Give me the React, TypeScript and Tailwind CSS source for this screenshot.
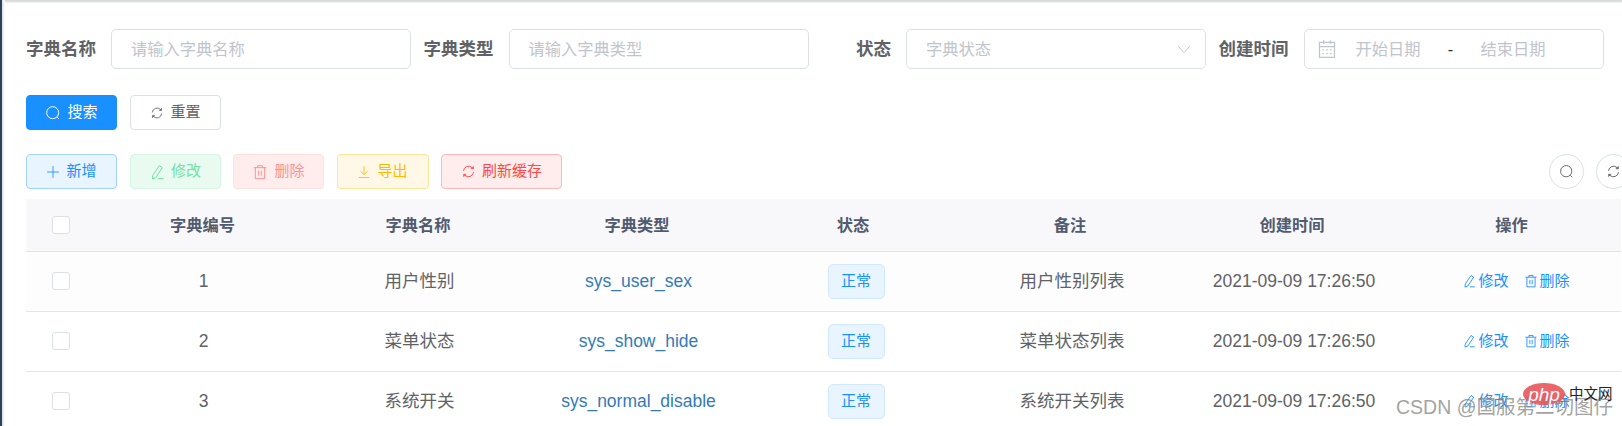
import React from "react";

type IconProps = { className?: string };
const Svg = ({ className, children }: IconProps & { children: React.ReactNode }) => (
  <svg viewBox="0 0 24 24" fill="none" stroke="currentColor" strokeWidth={1.5} className={className}>
    {children}
  </svg>
);
const SearchIcon = ({ className }: IconProps) => (
  <Svg className={className}>
    <circle cx="11.5" cy="11.5" r="9" />
    <path d="M18 18l3 3" />
  </Svg>
);
const RefreshIcon = ({ className }: IconProps) => (
  <Svg className={className}>
    <path d="M4 11a8.2 8.2 0 0 1 14-5l1 1" />
    <path d="M20 13a8.2 8.2 0 0 1-14 5l-1-1" />
    <path d="M19.8 3.5v4.2h-4.2" fill="currentColor" strokeWidth={1} />
    <path d="M4.2 20.5v-4.2h4.2" fill="currentColor" strokeWidth={1} />
  </Svg>
);
const EditIcon = ({ className }: IconProps) => (
  <Svg className={className}>
    <path d="M15.5 2.5l4.5 3-10 15-4.8 2 .3-5.2z" />
    <path d="M13.5 22H22" />
  </Svg>
);
const TrashIcon = ({ className }: IconProps) => (
  <Svg className={className}>
    <path d="M2.5 5.5h19M8.5 5.5V2.5h7v3M5 5.5V22h14V5.5M10 10v7.5M14 10v7.5" />
  </Svg>
);
const PlusIcon = ({ className }: IconProps) => (
  <Svg className={className}>
    <path d="M12 2v20M2 12h20" />
  </Svg>
);
const DownloadIcon = ({ className }: IconProps) => (
  <Svg className={className}>
    <path d="M12 2v14M6 10.5l6 6 6-6M3 21.5h18" />
  </Svg>
);
const CalendarIcon = ({ className }: IconProps) => (
  <Svg className={className}>
    <rect x="3" y="4" width="18" height="18" />
    <path d="M3 9h18M8 1.5V6M16 1.5V6M6.5 13h2M11 13h2M15.5 13h2M6.5 17.5h2M11 17.5h2M15.5 17.5h2" />
  </Svg>
);
const ChevronIcon = ({ className }: IconProps) => (
  <Svg className={className}>
    <path d="M3 7.5l9 10 9-10" />
  </Svg>
);

const Label = ({ children }: { children: React.ReactNode }) => (
  <label className="w-[85px] shrink-0 pr-[15px] text-right text-[17.5px] font-bold leading-[40px] text-[#606266] whitespace-nowrap">
    {children}
  </label>
);

const TextField = ({ placeholder }: { placeholder: string }) => (
  <div className="flex h-10 w-[300px] shrink-0 items-center rounded-[5px] border border-[#dcdfe6] bg-white pl-[19px] text-[16.25px] text-[#c0c4cc]">
    {placeholder}
  </div>
);

const ActionButton = ({
  className,
  icon,
  children,
}: {
  className: string;
  icon: React.ReactNode;
  children: React.ReactNode;
}) => (
  <button
    type="button"
    className={`flex h-[35px] shrink-0 items-center justify-center gap-[6px] rounded-[4px] border text-[15px] ${className}`}
  >
    {icon}
    <span>{children}</span>
  </button>
);

const rows = [
  { id: 1, name: "用户性别", type: "sys_user_sex", note: "用户性别列表", bg: "bg-[#fdfdfe]" },
  { id: 2, name: "菜单状态", type: "sys_show_hide", note: "菜单状态列表", bg: "bg-white" },
  { id: 3, name: "系统开关", type: "sys_normal_disable", note: "系统开关列表", bg: "bg-white" },
];

const Checkbox = () => (
  <span className="ml-[26px] block h-[18px] w-[18px] rounded-[3px] border border-[#dcdfe6] bg-white" />
);

const headers = ["字典编号", "字典名称", "字典类型", "状态", "备注", "创建时间", "操作"];

export default function App() {
  return (
    <div
      className="relative flex h-[426px] w-[1622px] overflow-hidden bg-white"
      style={{ fontFamily: '"Liberation Sans","Noto Sans CJK SC",sans-serif' }}
    >
      <div className="h-full w-[5px] shrink-0 bg-gradient-to-r from-[#304156] from-30% via-[#dfe4ea] via-50% to-white" />
      <main className="min-w-0 flex-1">
        <div className="h-[3px] w-full bg-gradient-to-b from-[#d0d2d4] to-[#f4f4f5]" />
        <div className="pl-[21px] pt-[26px]">
          <form className="flex items-center">
            <Label>字典名称</Label>
            <TextField placeholder="请输入字典名称" />
            <div className="w-[12.5px] shrink-0" />
            <Label>字典类型</Label>
            <TextField placeholder="请输入字典类型" />
            <div className="w-[12.5px] shrink-0" />
            <Label>状态</Label>
            <div className="flex h-10 w-[300px] shrink-0 items-center justify-between rounded-[5px] border border-[#dcdfe6] pl-[19px] pr-[13px] text-[16.25px] text-[#c0c4cc]">
              <span>字典状态</span>
              <ChevronIcon className="h-4 w-4" />
            </div>
            <div className="w-[12.5px] shrink-0" />
            <Label>创建时间</Label>
            <div className="flex h-10 w-[300px] shrink-0 items-center rounded-[5px] border border-[#dcdfe6] pl-[12px] text-[16.25px] text-[#c0c4cc]">
              <CalendarIcon className="h-5 w-5" />
              <span className="ml-[19px] w-[65px]">开始日期</span>
              <span className="w-[60px] text-center text-[#303133]">-</span>
              <span className="w-[65px]">结束日期</span>
            </div>
          </form>

          <div className="mt-[26px] flex gap-[13px]">
            <ActionButton
              className="w-[91px] border-[#1890ff] bg-[#1890ff] text-white"
              icon={<SearchIcon className="h-4 w-4" />}
            >
              搜索
            </ActionButton>
            <ActionButton
              className="w-[91px] border-[#dcdfe6] bg-white text-[#606266]"
              icon={<RefreshIcon className="h-[14px] w-[14px]" />}
            >
              重置
            </ActionButton>
          </div>

          <div className="mt-[24px] flex w-[1605px] items-center justify-between">
            <div className="flex gap-[12.5px]">
              <ActionButton
                className="w-[91px] border-[#a3d3ff] bg-[#e8f4ff] text-[#1890ff]"
                icon={<PlusIcon className="h-[14px] w-[14px]" />}
              >
                新增
              </ActionButton>
              <ActionButton
                className="w-[91px] border-[#d5f6e4] bg-[#e9faf1] text-[#71e2a3]"
                icon={<EditIcon className="h-4 w-4" />}
              >
                修改
              </ActionButton>
              <ActionButton
                className="w-[91px] border-[#ffe0e0] bg-[#ffeded] text-[#ff9292]"
                icon={<TrashIcon className="h-4 w-4" />}
              >
                删除
              </ActionButton>
              <ActionButton
                className="w-[92px] border-[#ffe399] bg-[#fff8e6] text-[#ffba00]"
                icon={<DownloadIcon className="h-[14px] w-[14px]" />}
              >
                导出
              </ActionButton>
              <ActionButton
                className="w-[121px] border-[#ffb6b6] bg-[#ffeded] text-[#ff4949]"
                icon={<RefreshIcon className="h-[15px] w-[15px]" />}
              >
                刷新缓存
              </ActionButton>
            </div>
            <div className="flex gap-[12px]">
              <button type="button" className="flex h-[35px] w-[35px] items-center justify-center rounded-full border border-[#dcdfe6] text-[#606266]">
                <SearchIcon className="h-[15px] w-[15px]" />
              </button>
              <button type="button" className="flex h-[35px] w-[35px] items-center justify-center rounded-full border border-[#dcdfe6] text-[#606266]">
                <RefreshIcon className="h-[15px] w-[15px]" />
              </button>
            </div>
          </div>

          <table className="mt-[10px] w-[1595px] table-fixed border-collapse text-center text-[17.5px] text-[#606266]">
            <colgroup>
              <col className="w-[69px]" />
              <col className="w-[215px]" />
              <col className="w-[216px]" />
              <col className="w-[222px]" />
              <col className="w-[210px]" />
              <col className="w-[224px]" />
              <col className="w-[220px]" />
              <col className="w-[219px]" />
            </colgroup>
            <thead>
              <tr className="h-[52px] border-b border-[#dfe6ec] bg-[#f8f8fa] text-[16.25px] text-[#515a6e]">
                <th className="font-normal">
                  <Checkbox />
                </th>
                {headers.map((h) => (
                  <th key={h} className="font-bold">
                    {h}
                  </th>
                ))}
              </tr>
            </thead>
            <tbody>
              {rows.map((r) => (
                <tr key={r.id} className={`h-[60px] border-b border-[#dfe6ec] ${r.bg}`}>
                  <td>
                    <Checkbox />
                  </td>
                  <td className="pl-[2px]">{r.id}</td>
                  <td className="pl-[3px]">{r.name}</td>
                  <td className="pl-[3px] text-[#337ab7]">{r.type}</td>
                  <td className="pl-[6px]">
                    <span className="inline-flex h-[35px] w-[57px] items-center justify-center rounded-[5px] border border-[#d1e9ff] bg-[#e8f4ff] text-[15px] text-[#1890ff]">
                      正常
                    </span>
                  </td>
                  <td className="pl-[4px]">{r.note}</td>
                  <td className="pl-[4px]">2021-09-09 17:26:50</td>
                  <td className="pl-[9px] text-[15px] text-[#1890ff]">
                    <div className="flex items-center justify-center gap-[15px]">
                      <span className="flex items-center gap-[2px]">
                        <EditIcon className="h-[14px] w-[14px]" />
                        修改
                      </span>
                      <span className="flex items-center gap-[2px]">
                        <TrashIcon className="h-[14px] w-[14px]" />
                        删除
                      </span>
                    </div>
                  </td>
                </tr>
              ))}
            </tbody>
          </table>
        </div>
      </main>

      <div className="absolute left-[1396px] top-[393px] whitespace-nowrap text-[19.5px] leading-[28px] text-[#8a8a8a]/80">
        CSDN @国服第二切图仔
      </div>
      <div className="absolute left-[1523px] top-[383px] flex h-[22px] w-[42px] items-center justify-center rounded-[50%] bg-[#e8555a]/90 text-[19px] italic leading-none text-white">
        php
      </div>
      <div className="absolute left-[1569px] top-[384px] text-[14.5px] leading-[20px] text-[#222]">中文网</div>
    </div>
  );
}
